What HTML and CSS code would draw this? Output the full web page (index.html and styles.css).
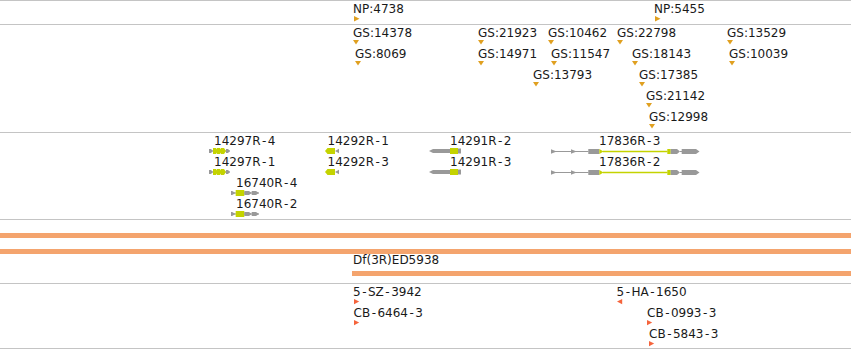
FILE: index.html
```html
<!DOCTYPE html>
<html lang="en">
<head>
<meta charset="utf-8">
<title>Genome tracks</title>
<link rel="stylesheet" href="styles.css">
</head>
<body>
<div class="panel">

  <div class="track t-np">
    <div class="feat" style="left:354px;top:1px;--lx:-1px"><span class="lbl">NP:4738</span><svg class="tri" width="6" height="6"><polygon points="0,0 5.5,2.7 0,5.4" class="gold"/></svg></div>
    <div class="feat" style="left:655px;top:1px;--lx:-1px"><span class="lbl">NP:5455</span><svg class="tri" width="6" height="6"><polygon points="0,0 5.5,2.7 0,5.4" class="gold"/></svg></div>
  </div>

  <div class="track t-gs">
    <div class="feat" style="left:353px;top:1px"><span class="lbl">GS:14378</span><svg class="tri" width="6" height="5"><polygon points="0,0 6,0 3,4.6" class="gold"/></svg></div>
    <div class="feat" style="left:478px;top:1px"><span class="lbl">GS:21923</span><svg class="tri" width="6" height="5"><polygon points="0,0 6,0 3,4.6" class="gold"/></svg></div>
    <div class="feat" style="left:548px;top:1px"><span class="lbl">GS:10462</span><svg class="tri" width="6" height="5"><polygon points="0,0 6,0 3,4.6" class="gold"/></svg></div>
    <div class="feat" style="left:617px;top:1px"><span class="lbl">GS:22798</span><svg class="tri" width="6" height="5"><polygon points="0,0 6,0 3,4.6" class="gold"/></svg></div>
    <div class="feat" style="left:727px;top:1px"><span class="lbl">GS:13529</span><svg class="tri" width="6" height="5"><polygon points="0,0 6,0 3,4.6" class="gold"/></svg></div>

    <div class="feat" style="left:355px;top:22px"><span class="lbl">GS:8069</span><svg class="tri" width="6" height="5"><polygon points="0,0 6,0 3,4.6" class="gold"/></svg></div>
    <div class="feat" style="left:478px;top:22px"><span class="lbl">GS:14971</span><svg class="tri" width="6" height="5"><polygon points="0,0 6,0 3,4.6" class="gold"/></svg></div>
    <div class="feat" style="left:551px;top:22px"><span class="lbl">GS:11547</span><svg class="tri" width="6" height="5"><polygon points="0,0 6,0 3,4.6" class="gold"/></svg></div>
    <div class="feat" style="left:632px;top:22px"><span class="lbl">GS:18143</span><svg class="tri" width="6" height="5"><polygon points="0,0 6,0 3,4.6" class="gold"/></svg></div>
    <div class="feat" style="left:729px;top:22px"><span class="lbl">GS:10039</span><svg class="tri" width="6" height="5"><polygon points="0,0 6,0 3,4.6" class="gold"/></svg></div>

    <div class="feat" style="left:533px;top:43px"><span class="lbl">GS:13793</span><svg class="tri" width="6" height="5"><polygon points="0,0 6,0 3,4.6" class="gold"/></svg></div>
    <div class="feat" style="left:639px;top:43px"><span class="lbl">GS:17385</span><svg class="tri" width="6" height="5"><polygon points="0,0 6,0 3,4.6" class="gold"/></svg></div>

    <div class="feat" style="left:646px;top:64px"><span class="lbl">GS:21142</span><svg class="tri" width="6" height="5"><polygon points="0,0 6,0 3,4.6" class="gold"/></svg></div>

    <div class="feat" style="left:649px;top:85px"><span class="lbl">GS:12998</span><svg class="tri" width="6" height="5"><polygon points="0,0 6,0 3,4.6" class="gold"/></svg></div>
  </div>

  <div class="track t-gene">
    <div class="feat" style="left:209px;top:1px;--lx:5px"><span class="lbl">14297R<span class="hy">-</span>4</span>
      <svg width="21" height="6"><line x1="0" y1="3" x2="21" y2="3" class="gl"/><polygon points="0,1 2,1 4,3 2,5 0,5" class="gr"/><polygon points="4,0 7,0 9,3 7,6 4,6" class="cds"/><polygon points="8,0 11,0 13,3 11,6 8,6" class="cds"/><polygon points="12,0 15,0 17,3 15,6 12,6" class="cds"/><polygon points="17,1 19,1 21,3 19,5 17,5" class="gr"/></svg>
    </div>
    <div class="feat" style="left:209px;top:22px;--lx:5px"><span class="lbl">14297R<span class="hy">-</span>1</span>
      <svg width="21" height="6"><line x1="0" y1="3" x2="21" y2="3" class="gl"/><polygon points="0,1 2,1 4,3 2,5 0,5" class="gr"/><polygon points="4,0 7,0 9,3 7,6 4,6" class="cds"/><polygon points="8,0 11,0 13,3 11,6 8,6" class="cds"/><polygon points="12,0 15,0 17,3 15,6 12,6" class="cds"/><polygon points="17,1 19,1 21,3 19,5 17,5" class="gr"/></svg>
    </div>
    <div class="feat" style="left:231px;top:43px;--lx:5px"><span class="lbl">16740R<span class="hy">-</span>4</span>
      <svg width="28" height="6"><line x1="0" y1="3" x2="28" y2="3" class="gl"/><rect x="0" y="1" width="1.2" height="4" class="gr"/><polygon points="1,1 4.7,3 1,5" class="gr"/><rect x="4.7" y="0" width="8.6" height="6" class="cds"/><polygon points="13.3,1 18,1 20.7,3 18,5 13.3,5" class="gr"/><polygon points="20.7,1 25,1 28,3 25,5 20.7,5" class="gr"/></svg>
    </div>
    <div class="feat" style="left:231px;top:64px;--lx:5px"><span class="lbl">16740R<span class="hy">-</span>2</span>
      <svg width="28" height="6"><line x1="0" y1="3" x2="28" y2="3" class="gl"/><rect x="0" y="1" width="1.2" height="4" class="gr"/><polygon points="1,1 4.7,3 1,5" class="gr"/><rect x="4.7" y="0" width="8.6" height="6" class="cds"/><polygon points="13.3,1 18,1 20.7,3 18,5 13.3,5" class="gr"/><polygon points="20.7,1 25,1 28,3 25,5 20.7,5" class="gr"/></svg>
    </div>
    <div class="feat" style="left:325px;top:1px;--lx:2.5px"><span class="lbl">14292R<span class="hy">-</span>1</span>
      <svg width="14" height="6"><polygon points="0,3 2.5,0 10,0 10,6 2.5,6" class="cds"/><polygon points="10,3 14,0.8 14,5.2" class="gr"/></svg>
    </div>
    <div class="feat" style="left:325px;top:22px;--lx:2.5px"><span class="lbl">14292R<span class="hy">-</span>3</span>
      <svg width="14" height="6"><polygon points="0,3 2.5,0 10,0 10,6 2.5,6" class="cds"/><polygon points="10,3 14,0.8 14,5.2" class="gr"/></svg>
    </div>
    <div class="feat" style="left:429px;top:1px;--lx:21px"><span class="lbl">14291R<span class="hy">-</span>2</span>
      <svg width="32" height="6"><polygon points="0,3 4,1 21,1 21,5 4,5" class="gr"/><rect x="21" y="0" width="8" height="6" class="cds"/><rect x="29" y="0.5" width="3" height="5" class="gr"/></svg>
    </div>
    <div class="feat" style="left:429px;top:22px;--lx:21px"><span class="lbl">14291R<span class="hy">-</span>3</span>
      <svg width="32" height="6"><polygon points="0,3 4,1 21,1 21,5 4,5" class="gr"/><rect x="21" y="0" width="8" height="6" class="cds"/><rect x="29" y="0.5" width="3" height="5" class="gr"/></svg>
    </div>
    <div class="feat" style="left:551px;top:1px;--lx:48px"><span class="lbl">17836R<span class="hy">-</span>3</span>
      <svg width="149" height="6"><line x1="0" y1="3.5" x2="37.5" y2="3.5" class="gl"/><polygon points="0,1.2 5.7,3.5 0,5.8" class="gr"/><polygon points="20,1.2 25.7,3.5 20,5.8" class="gr"/><rect x="37.3" y="1" width="11" height="5" class="gr"/><polygon points="48.3,1 52.5,3.5 48.3,6" class="cds"/><line x1="52" y1="3.5" x2="116.5" y2="3.5" class="cl"/><rect x="116.3" y="1" width="3.4" height="5" class="cds"/><polygon points="119.7,1 126,1 129,3.5 126,6 119.7,6" class="gr"/><line x1="129" y1="3.5" x2="131" y2="3.5" class="gl"/><polygon points="130.7,1 145,1 148.5,3.5 145,6 130.7,6" class="gr"/></svg>
    </div>
    <div class="feat" style="left:551px;top:22px;--lx:48px"><span class="lbl">17836R<span class="hy">-</span>2</span>
      <svg width="149" height="6"><line x1="0" y1="3.5" x2="37.5" y2="3.5" class="gl"/><polygon points="0,1.2 5.7,3.5 0,5.8" class="gr"/><polygon points="20,1.2 25.7,3.5 20,5.8" class="gr"/><rect x="37.3" y="1" width="11" height="5" class="gr"/><polygon points="48.3,1 52.5,3.5 48.3,6" class="cds"/><line x1="52" y1="3.5" x2="116.5" y2="3.5" class="cl"/><rect x="116.3" y="1" width="3.4" height="5" class="cds"/><polygon points="119.7,1 126,1 129,3.5 126,6 119.7,6" class="gr"/><line x1="129" y1="3.5" x2="131" y2="3.5" class="gl"/><polygon points="130.7,1 145,1 148.5,3.5 145,6 130.7,6" class="gr"/></svg>
    </div>
  </div>

  <div class="track t-df">
    <div class="bar"></div>
    <div class="bar"></div>
    <div class="feat df" style="left:352px;top:33px;--lx:1px"><span class="lbl">Df(3R)ED5938</span><div class="dfbar"></div></div>
  </div>

  <div class="track t-ins">
    <div class="feat" style="left:354px;top:1px;--lx:-1px"><span class="lbl">5<span class="hy">-</span>SZ<span class="hy">-</span>3942</span><svg class="tri" width="6" height="6"><polygon points="0,0 5.2,2.6 0,5.2" class="red"/></svg></div>
    <div class="feat" style="left:354px;top:22px;--lx:-0.5px"><span class="lbl">CB<span class="hy">-</span>6464<span class="hy">-</span>3</span><svg class="tri" width="6" height="6"><polygon points="0,0 5.2,2.6 0,5.2" class="red"/></svg></div>
    <div class="feat" style="left:617px;top:1px;--lx:-0.5px"><span class="lbl">5<span class="hy">-</span>HA<span class="hy">-</span>1650</span><svg class="tri" width="6" height="6"><polygon points="5.2,0 0,2.6 5.2,5.2" class="red"/></svg></div>
    <div class="feat" style="left:647px;top:22px;--lx:0px"><span class="lbl">CB<span class="hy">-</span>0993<span class="hy">-</span>3</span><svg class="tri" width="6" height="6"><polygon points="0,0 5.2,2.6 0,5.2" class="red"/></svg></div>
    <div class="feat" style="left:649px;top:43px;--lx:0px"><span class="lbl">CB<span class="hy">-</span>5843<span class="hy">-</span>3</span><svg class="tri" width="6" height="6"><polygon points="0,0 5.2,2.6 0,5.2" class="red"/></svg></div>
  </div>

</div>
</body>
</html>
```

FILE: styles.css
```css
html, body {
  margin: 0;
  padding: 0;
  background: #ffffff;
}

.panel {
  width: 851px;
  display: flex;
  flex-direction: column;
  font-family: "DejaVu Sans", "Liberation Sans", sans-serif;
  font-size: 12px;
  color: #1a1a1a;
}

.track {
  position: relative;
  border-top: 1px solid #c4c4c4;
  overflow: hidden;
}

.t-np   { height: 23px; }
.t-gs   { height: 107px; }
.t-gene { height: 86px; }
.t-df   {
  display: flex;
  flex-direction: column;
  gap: 11px;
  padding-top: 13px;
  box-sizing: border-box;
  height: 64px;
}
.t-ins  {
  height: 64px;
  border-bottom: 1px solid #c4c4c4;
}

.feat {
  position: absolute;
  display: flex;
  flex-direction: column;
  align-items: flex-start;
}

.lbl {
  display: block;
  height: 14px;
  line-height: 14px;
  white-space: nowrap;
  margin-left: var(--lx, 0px);
}

.hy {
  margin: 0 1.5px;
}

.feat svg {
  display: block;
  overflow: visible;
}

.gold { fill: #e0a020; }
.red  { fill: #f5643c; }
.gr   { fill: #999999; }
.cds  { fill: #c4d300; }
.gl   { stroke: #999999; stroke-width: 1; }
.cl   { stroke: #c4d300; stroke-width: 1.6; }

.bar {
  height: 5px;
  background: #f4a46e;
  flex: none;
}

.df {
  right: 0;
  align-items: stretch;
}

.df .lbl {
  height: 18px;
  line-height: 14px;
}

.dfbar {
  height: 5px;
  background: #f4a46e;
}
```
